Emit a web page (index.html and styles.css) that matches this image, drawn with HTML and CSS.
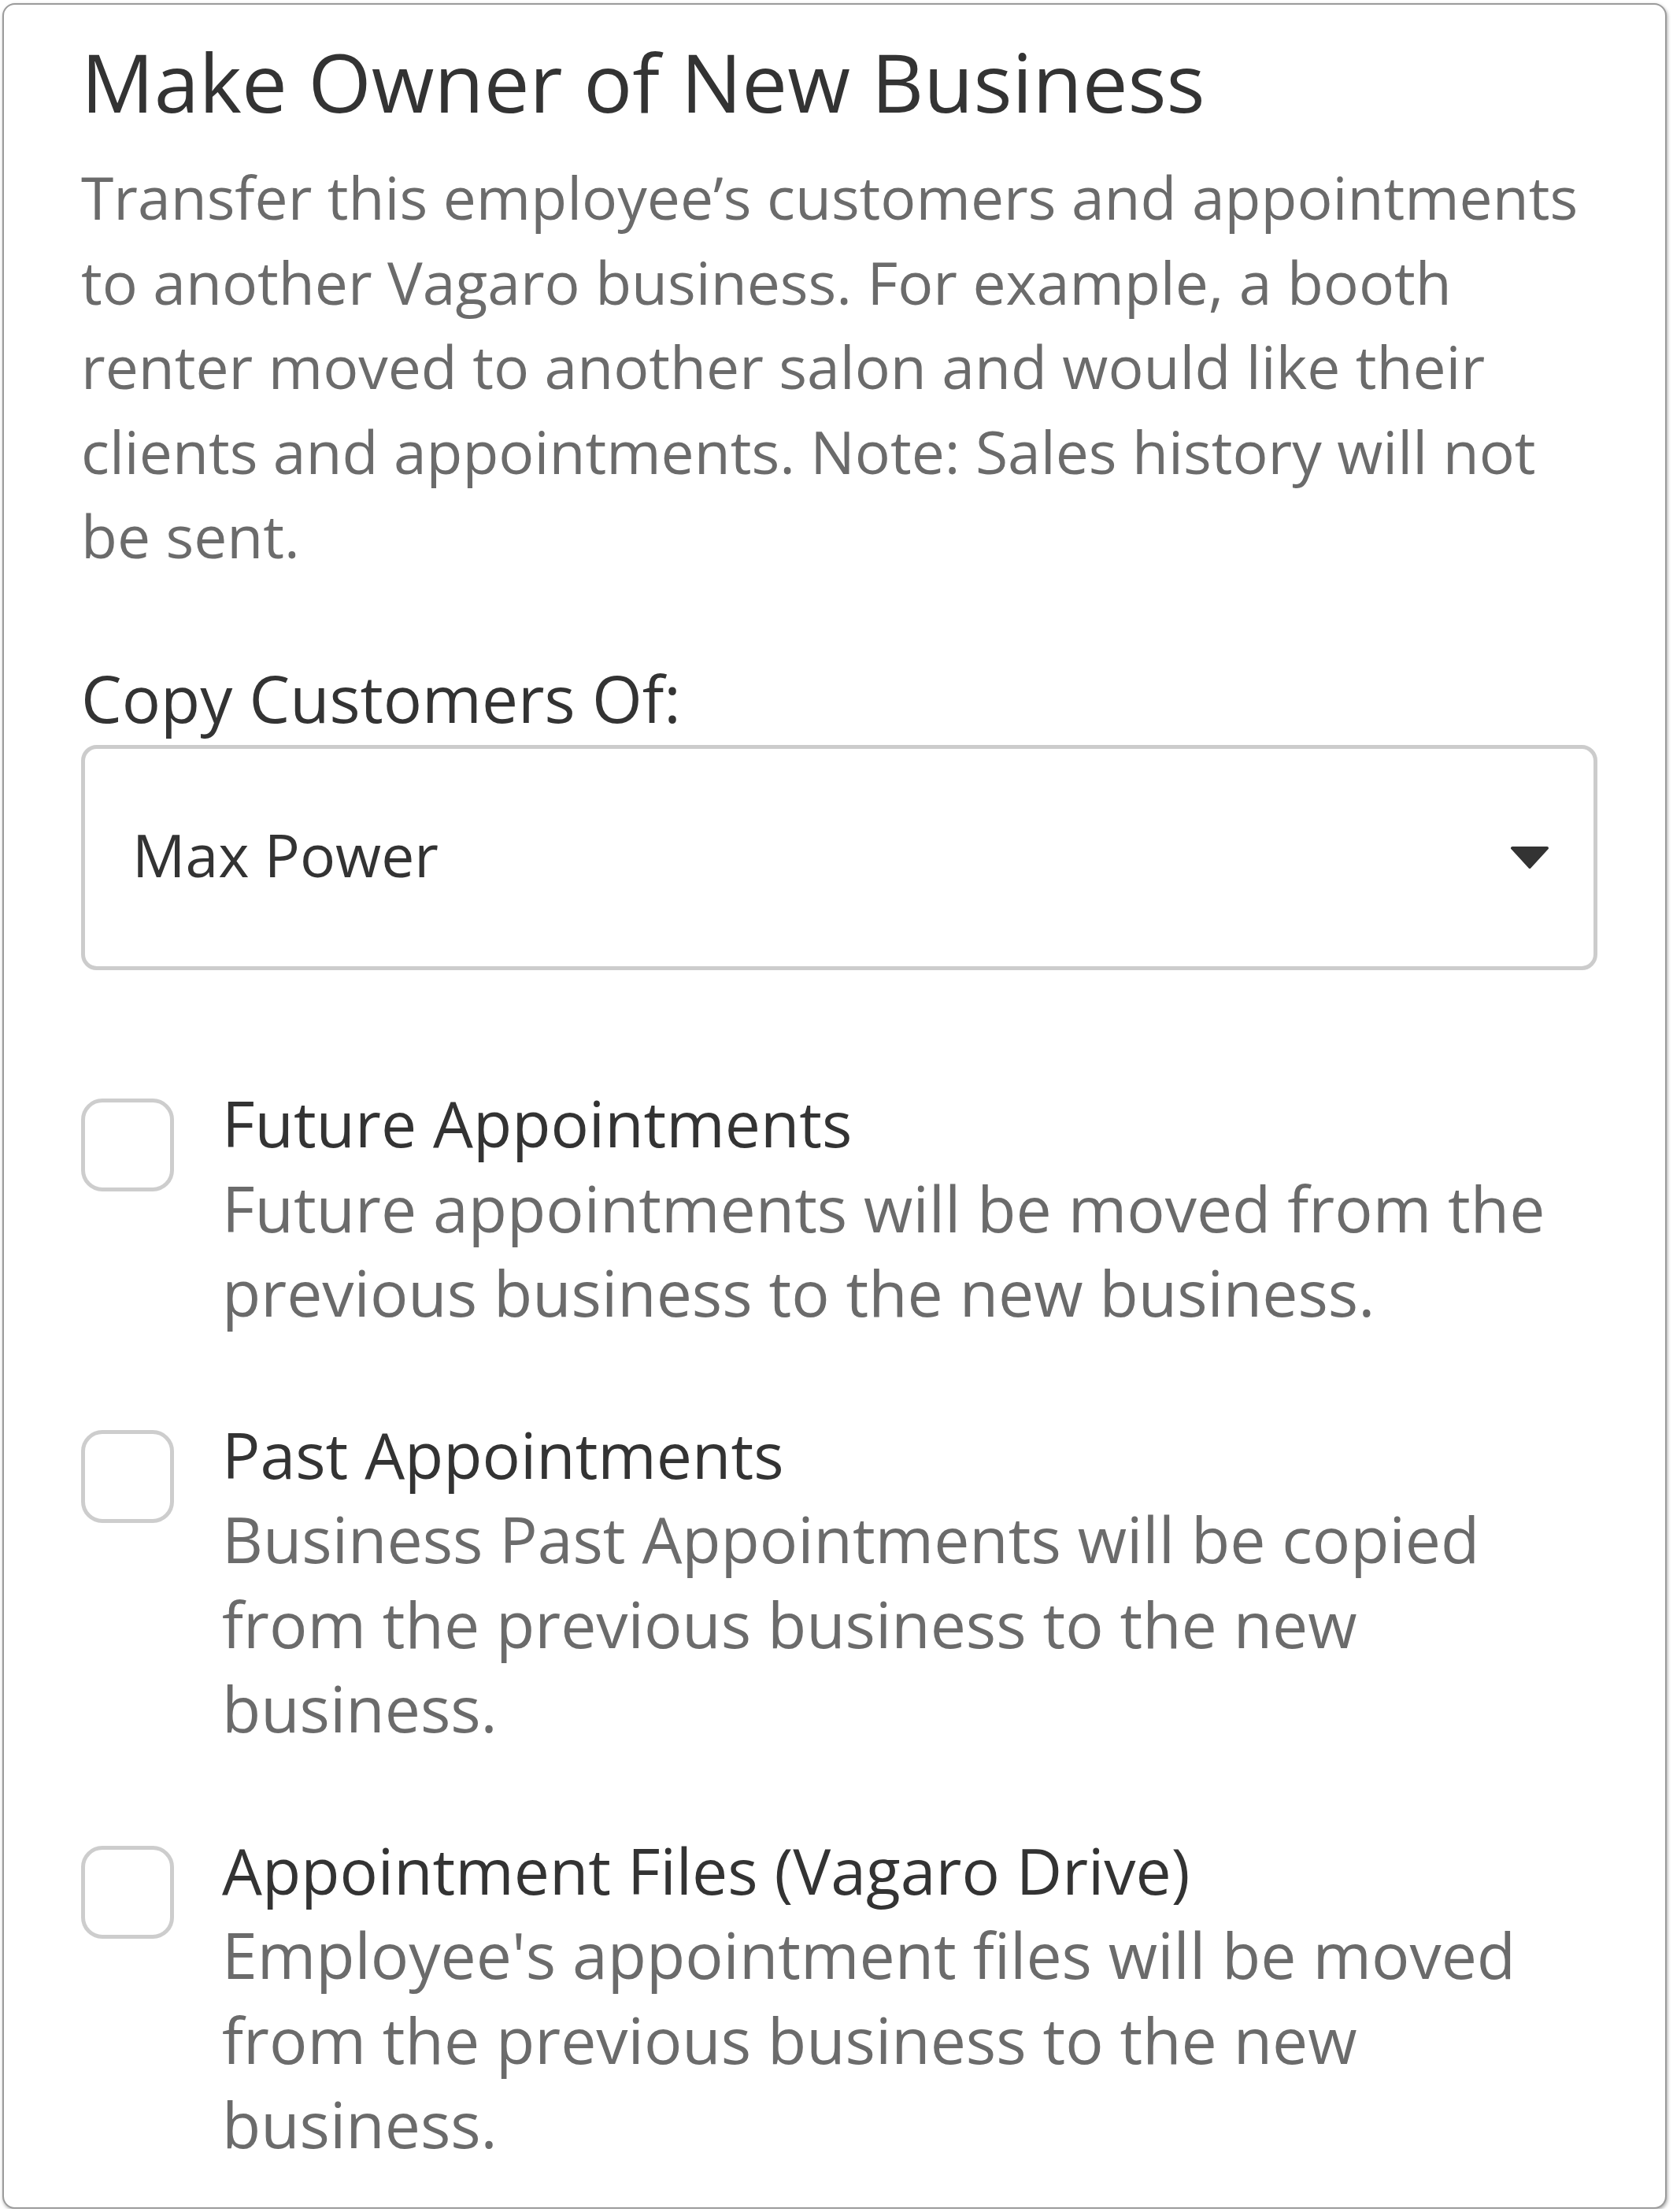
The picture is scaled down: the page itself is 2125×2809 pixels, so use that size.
FILE: index.html
```html
<!DOCTYPE html>
<html lang="en">
<head>
<meta charset="utf-8">
<title>Make Owner of New Business</title>
<link rel="stylesheet" href="styles.css">
</head>
<body>
<div class="card">
  <h1 class="title">Make Owner of New Business</h1>
  <p class="intro">Transfer this employee’s customers and appointments to another Vagaro business. For example, a booth renter moved to another salon and would like their clients and appointments. Note: Sales history will not be sent.</p>

  <div class="field-label">Copy Customers Of:</div>
  <div class="select">
    <span class="select-value">Max Power</span>
    <svg class="caret" width="50" height="28" viewBox="0 0 50 28" aria-hidden="true">
      <path d="M3 2 H47 L25 26 Z" fill="#333" stroke="#333" stroke-width="4" stroke-linejoin="round"/>
    </svg>
  </div>

  <div class="options">
    <div class="option">
      <span class="checkbox"></span>
      <div class="option-text">
        <div class="option-title">Future Appointments</div>
        <div class="option-desc">Future appointments will be moved from the previous business to the new business.</div>
      </div>
    </div>
    <div class="option">
      <span class="checkbox"></span>
      <div class="option-text">
        <div class="option-title">Past Appointments</div>
        <div class="option-desc">Business Past Appointments will be copied from the previous business to the new business.</div>
      </div>
    </div>
    <div class="option">
      <span class="checkbox"></span>
      <div class="option-text">
        <div class="option-title">Appointment Files (Vagaro Drive)</div>
        <div class="option-desc">Employee's appointment files will be moved from the previous business to the new business.</div>
      </div>
    </div>
  </div>
</div>
</body>
</html>
```

FILE: styles.css
```css
html, body {
  margin: 0;
  padding: 0;
  background: #ffffff;
}

body {
  font-family: "Open Sans", "Noto Sans", sans-serif;
  color: #333333;
}

.card {
  margin: 4px 8px 0 3px;
  box-sizing: border-box;
  border: 2px solid #9b9b9b;
  border-radius: 16px;
  box-shadow: 1px 2px 4px rgba(0, 0, 0, 0.35);
  background: #ffffff;
  padding: 36px 86px 51px 98px;
}

.title {
  margin: 0 0 33px 0;
  font-size: 103px;
  line-height: 122px;
  font-weight: 400;
  color: #333333;
}

.intro {
  margin: 0;
  font-size: 75px;
  line-height: 107.5px;
  color: #6b6b6b;
}

.field-label {
  margin-top: 98px;
  font-size: 82px;
  line-height: 107.5px;
  color: #333333;
}

.select {
  margin-top: 6px;
  box-sizing: border-box;
  height: 286px;
  border: 5px solid #cccccc;
  border-radius: 20px;
  display: flex;
  align-items: center;
  justify-content: space-between;
  padding: 0 56px 8px 60px;
}

.select-value {
  font-size: 75px;
  line-height: 102px;
  color: #333333;
}

.caret {
  display: block;
  margin-top: 8px;
}

.options {
  margin-top: 141px;
  display: flex;
  flex-direction: column;
  gap: 98px;
}

.option {
  display: flex;
  align-items: flex-start;
  gap: 61px;
}

.checkbox {
  flex-shrink: 0;
  box-sizing: border-box;
  width: 118px;
  height: 118px;
  margin-top: 22px;
  border: 5px solid #cdcdcd;
  border-radius: 27px;
  background: #ffffff;
}

.option-text {
  flex: 1;
  font-size: 80.5px;
  line-height: 107.5px;
}

.option-title {
  color: #333333;
}

.option-desc {
  color: #6b6b6b;
}
```
